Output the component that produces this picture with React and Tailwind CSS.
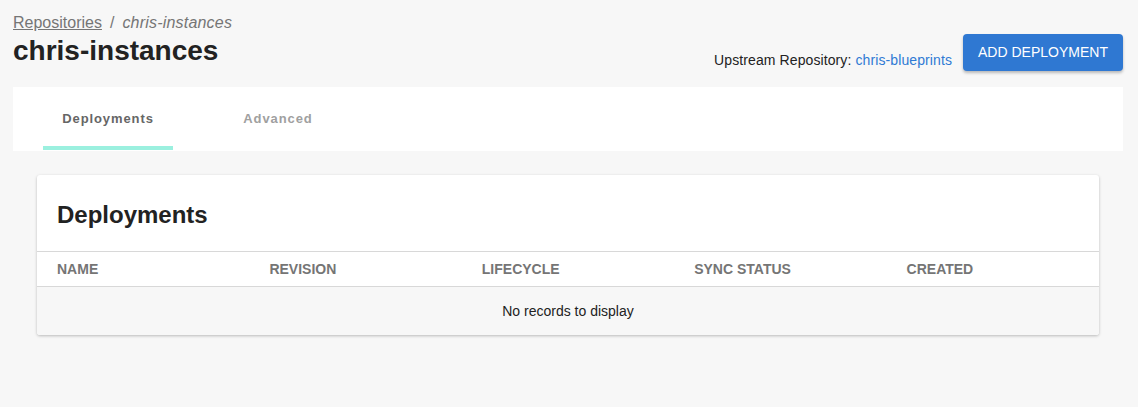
import React from "react";

const columns = ["Name", "Revision", "Lifecycle", "Sync Status", "Created"];

const App = () => {
  return (
    <div
      className="min-h-[407px] bg-[#f7f7f7] text-[#222]"
      style={{ fontFamily: '"Liberation Sans", Arial, sans-serif' }}
    >
      {/* header */}
      <div className="flex items-end justify-between pl-[13px] pr-[15px] pt-[13px] h-[87px] pb-[16px]">
        <div>
          <div className="text-[16px] leading-[20px] text-[#757575]">
            <a className="underline">Repositories</a>
            <span className="mx-[8px]">/</span>
            <span className="italic tracking-[0.2px]">chris-instances</span>
          </div>
          <h1 className="text-[28px] leading-[32px] font-bold text-[#222] mt-[2px] mb-[4px]">
            chris-instances
          </h1>
        </div>
        <div className="flex items-end gap-[11px]">
          <div className="text-[14px] leading-[16px] mb-[3px] tracking-[0.1px]">
            Upstream Repository:{" "}
            <a className="text-[#2f7ad4]">chris-blueprints</a>
          </div>
          <button className="h-[37px] w-[160px] rounded-[4px] bg-[#2f78d2] text-white text-[14px] uppercase shadow-[0_2px_3px_rgba(0,0,0,0.25)]">
            Add Deployment
          </button>
        </div>
      </div>

      {/* tabs */}
      <div className="mx-[13px] mr-[15px] h-[64px] bg-white flex pl-[30px]">
        <div className="w-[130px] flex flex-col">
          <div className="flex-1 flex items-center justify-center pt-[4px] text-[13px] font-bold tracking-[0.9px] text-[#666]">
            Deployments
          </div>
          <div className="h-[4px] bg-[#9bf0df] mb-[1px]" />
        </div>
        <div className="w-[130px] ml-[40px] flex flex-col">
          <div className="flex-1 flex items-center justify-center pt-[4px] text-[13px] font-bold tracking-[0.9px] text-[#a0a0a0]">
            Advanced
          </div>
          <div className="h-[5px]" />
        </div>
      </div>

      {/* card */}
      <div className="mx-[37px] mr-[39px] mt-[24px] bg-white rounded-[3px] shadow-[0_1px_3px_rgba(0,0,0,0.25)] overflow-hidden">
        <div className="h-[77px] flex items-center px-[20px] pt-[4px] border-b border-[#d8d8d8]">
          <h2 className="text-[24px] font-bold text-[#222]">Deployments</h2>
        </div>
        <div className="grid grid-cols-5 h-[35px] items-center border-b border-[#d8d8d8]">
          {columns.map((c) => (
            <div
              key={c}
              className="px-[20px] pt-[1px] text-[14px] font-bold uppercase text-[#757575]"
            >
              {c}
            </div>
          ))}
        </div>
        <div className="h-[48px] bg-[#f7f7f7] flex items-center justify-center text-[14px] text-[#222]">
          No records to display
        </div>
      </div>
    </div>
  );
};

export default App;
